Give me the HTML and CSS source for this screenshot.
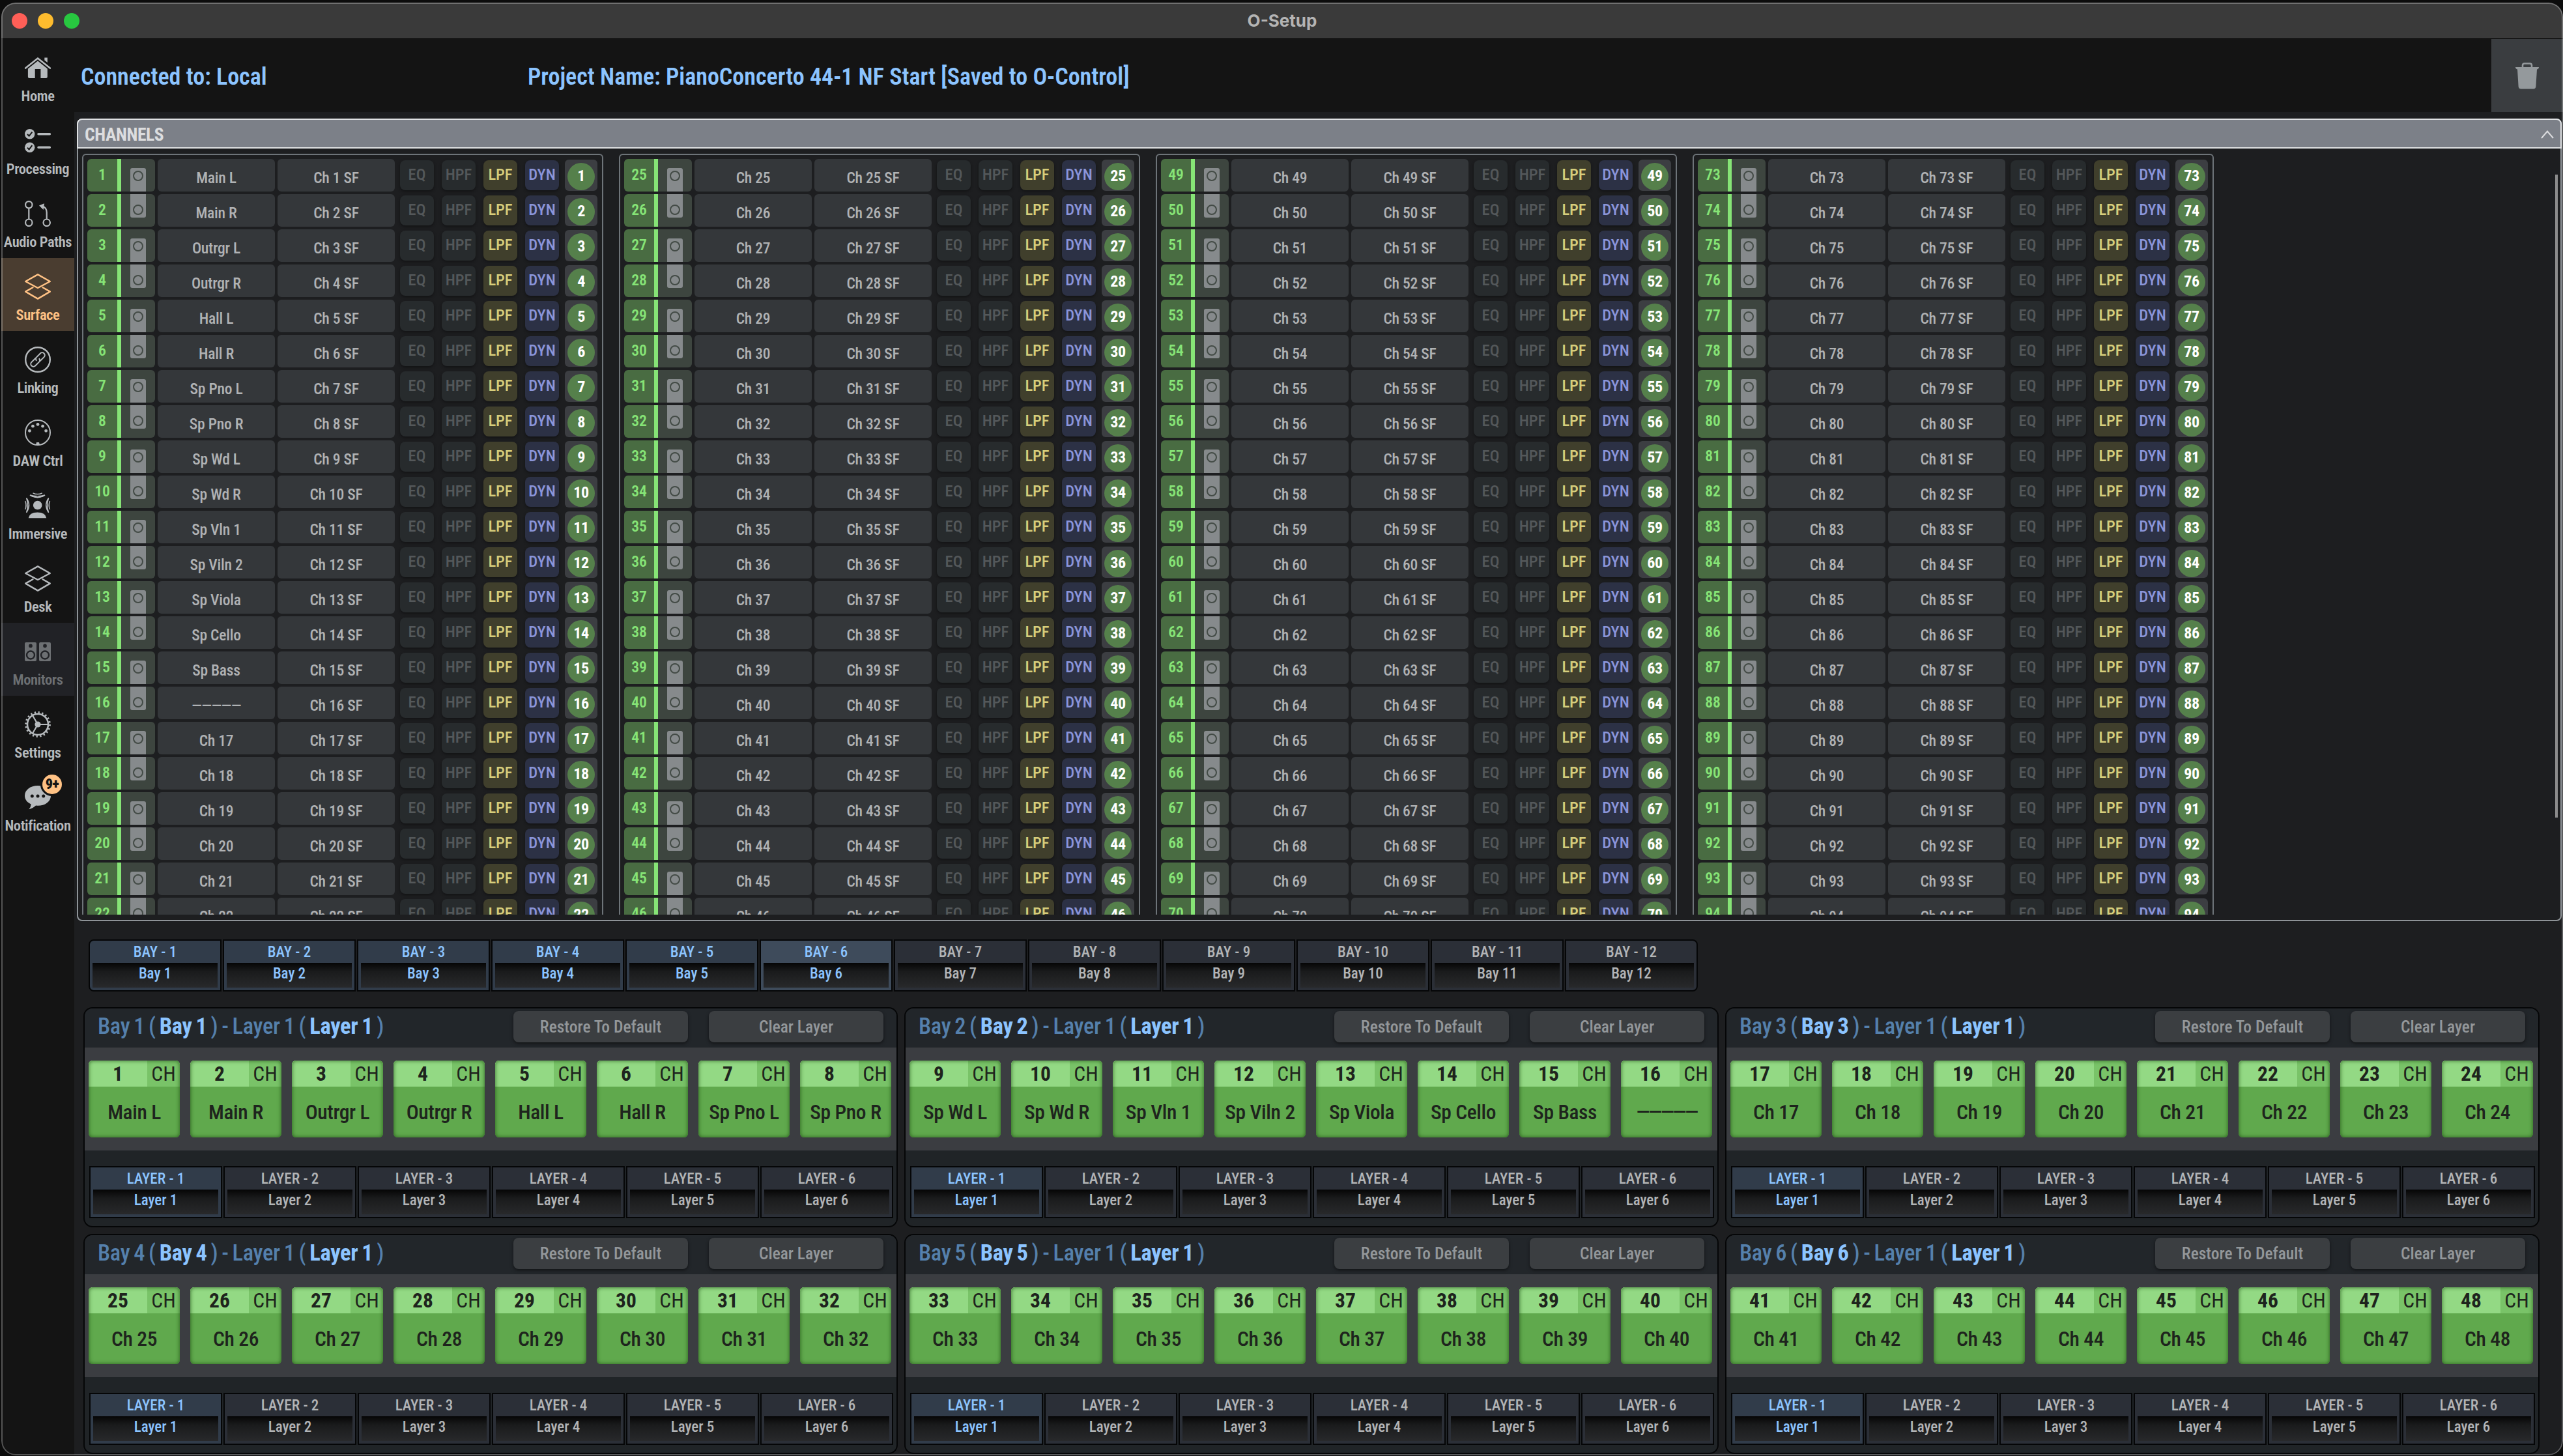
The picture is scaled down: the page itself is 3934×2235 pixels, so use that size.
FILE: index.html
```html
<!DOCTYPE html>
<html lang="en">
<head>
  <meta charset="UTF-8" />
  <meta name="viewport" content="width=device-width, initial-scale=1.0" />
  <title>O-Setup</title>
  <link rel="stylesheet" href="styles.css">
</head>
<body>
  <div class="window">
    <div class="titlebar">
      <div class="lights">
        <span class="light red"></span>
        <span class="light yellow"></span>
        <span class="light green"></span>
      </div>
      <div class="window-title">O-Setup</div>
    </div>

    <div class="main">
      <nav class="sidebar">
        <a class="nav-item">
          <svg viewBox="0 0 40 40">
            <path d="M1.2 20.6 L20 5.4 L38.8 20.6" fill="none" stroke="currentColor" stroke-width="2.6" stroke-linecap="round" stroke-linejoin="round" />
            <path d="M20 9.6 L34.8 21.5 V33.5 Q34.8 36 32.3 36 H24.4 V22 H15.7 V36 H7.4 Q4.9 36 4.9 33.5 V21.5 Z" fill="currentColor" />
            <path d="M30.3 4.6 H34.8 V12 L30.3 8.4 Z" fill="currentColor" />
          </svg>
          <span>Home</span>
        </a>
        <a class="nav-item">
          <svg viewBox="0 0 40 40">
            <circle cx="7.7" cy="9.7" r="7.7" fill="currentColor" />
            <circle cx="7.7" cy="30.3" r="7.7" fill="currentColor" />
            <path d="M4 10 L6.6 12.8 L11.4 6.6 M4 30.6 L6.6 33.4 L11.4 27.2" fill="none" stroke="#141414" stroke-width="2" />
            <path d="M21 9.7 H38.3 M21 30.3 H38.3" stroke="currentColor" stroke-width="3.6" stroke-linecap="round" />
          </svg>
          <span>Processing</span>
        </a>
        <a class="nav-item">
          <svg viewBox="0 0 40 40" fill="none" stroke="currentColor" stroke-width="2.2">
            <circle cx="6.3" cy="6.3" r="5.2" />
            <circle cx="6.3" cy="33.7" r="5.2" />
            <circle cx="33.7" cy="33.7" r="5.2" />
            <path d="M6.3 11.5 V28.5 M33.7 28.5 V18 Q33.7 10.5 27 8.6" />
            <path d="M22 7.6 L30 4.2 L28.6 14 Z" fill="currentColor" stroke="none" />
          </svg>
          <span>Audio Paths</span>
        </a>
        <a class="nav-item active">
          <svg viewBox="0 0 40 40" fill="none" stroke="currentColor" stroke-width="2.4" stroke-linejoin="round" stroke-linecap="round">
            <path d="M20 1.4 L38.8 12 L20 22 L1.2 12 Z" />
            <path d="M12.4 21.2 L1.2 27.6 L20 38.6 L38.8 27.6 L27.6 21.2" />
          </svg>
          <span>Surface</span>
        </a>
        <a class="nav-item">
          <svg viewBox="0 0 40 40" fill="none" stroke="currentColor" stroke-width="2.4">
            <circle cx="20" cy="20" r="18.8" />
            <g transform="rotate(-45 20 20)" stroke-width="2">
              <path d="M20 16 H10.5 a4 4 0 0 0 0 8 H18.5 a4 4 0 0 0 4 -4" />
              <path d="M20 24 H29.5 a4 4 0 0 0 0 -8 H21.5 a4 4 0 0 0 -4 4" />
            </g>
          </svg>
          <span>Linking</span>
        </a>
        <a class="nav-item">
          <svg viewBox="0 0 40 40" fill="currentColor">
            <circle cx="20" cy="20" r="19" fill="none" stroke="currentColor" stroke-width="2" />
            <circle cx="7.4" cy="17.3" r="2.4" />
            <circle cx="12.4" cy="10.2" r="2.4" />
            <circle cx="20" cy="7.4" r="2.4" />
            <circle cx="27.6" cy="10.2" r="2.4" />
            <circle cx="32.6" cy="17.3" r="2.4" />
            <path d="M18 35 H22 L23 39 H17 Z" />
          </svg>
          <span>DAW Ctrl</span>
        </a>
        <a class="nav-item">
          <svg viewBox="0 0 40 40" fill="none" stroke="currentColor" stroke-width="1.5">
            <circle cx="19.7" cy="19.5" r="6.8" fill="currentColor" stroke="none" />
            <path d="M5.7 39.2 Q7 30.4 19.5 30.4 Q32 30.4 33.2 39.2 Z" fill="currentColor" stroke="none" />
            <path d="M8 4 Q19.6 7.6 31 4 Q19.6 11.4 8 4 Z" />
            <path d="M12.5 0.8 Q19.6 4.4 26.8 0.8" />
            <path d="M2.6 8.4 Q6.4 19.5 2.6 30.8 Q10.4 19.5 2.6 8.4 Z" />
            <path d="M0.6 13 Q3.4 19.5 0.6 26" />
            <path d="M36.6 8.4 Q32.8 19.5 36.6 30.8 Q28.8 19.5 36.6 8.4 Z" />
            <path d="M38.6 13 Q35.8 19.5 38.6 26" />
          </svg>
          <span>Immersive</span>
        </a>
        <a class="nav-item">
          <svg viewBox="0 0 40 40" fill="none" stroke="currentColor" stroke-width="2.4" stroke-linejoin="round" stroke-linecap="round">
            <path d="M20 1.4 L38.8 12 L20 22 L1.2 12 Z" />
            <path d="M12.4 21.2 L1.2 27.6 L20 38.6 L38.8 27.6 L27.6 21.2" />
          </svg>
          <span>Desk</span>
        </a>
        <a class="nav-item disabled">
          <svg viewBox="0 0 40 40" fill="currentColor">
            <rect x="0" y="6" width="18" height="29" rx="2" />
            <rect x="22" y="6" width="18" height="29" rx="2" />
            <g fill="#212226">
              <circle cx="9" cy="11.4" r="2.8" />
              <circle cx="31" cy="11.4" r="2.8" />
            </g>
            <g fill="none" stroke="#212226" stroke-width="2.4">
              <circle cx="9" cy="25.5" r="6" />
              <circle cx="31" cy="25.5" r="6" />
            </g>
          </svg>
          <span>Monitors</span>
        </a>
        <a class="nav-item">
          <svg viewBox="0 0 40 40" fill="none" stroke="currentColor">
            <circle cx="20" cy="20" r="16" stroke-width="2.6" />
            <circle cx="20" cy="20" r="18.4" stroke-width="3" stroke-dasharray="2.3 3.48" />
            <circle cx="20" cy="20" r="4.6" fill="currentColor" stroke="none" />
            <path d="M20 20 H36 M20 20 L12 6.2 M20 20 L12 33.8" stroke-width="2.2" />
          </svg>
          <span>Settings</span>
        </a>
        <a class="nav-item">
          <svg viewBox="0 0 40 40">
            <path d="M20 2 C31.5 2 40 8.6 40 17.4 C40 26.5 31 32.8 20 32.8 L17 32.6 Q13 36.6 6.4 38.2 Q9.4 35 9.6 30.4 C3.6 27.6 0 23 0 17.4 C0 8.6 8.5 2 20 2 Z" fill="currentColor" />
            <g fill="#141414">
              <circle cx="11.3" cy="18" r="2.5" />
              <circle cx="20" cy="18" r="2.5" />
              <circle cx="28.7" cy="18" r="2.5" />
            </g>
          </svg>
          <span>Notification</span>
          <b class="nav-badge">9+</b>
        </a>
      </nav>

      <div class="content">
        <header class="header">
          <div class="connected">Connected to: Local</div>
          <div class="project">Project Name: PianoConcerto 44-1 NF Start [Saved to O-Control]</div>
          <button class="trash">
            <svg viewBox="0 0 36 41">
              <path d="M11 8 V4.5 Q11 1.5 14 1.5 H22 Q25 1.5 25 4.5 V8" fill="none" stroke="currentColor" stroke-width="2.6" />
              <path d="M0 7 H36 Q36 10 33 10.4 L31.4 36.5 Q31.2 40.5 27.2 40.5 H8.8 Q4.8 40.5 4.6 36.5 L3 10.4 Q0 10 0 7 Z" fill="currentColor" />
            </svg>
          </button>
        </header>

        <section class="channels">
          <div class="channels-head">
            <span>CHANNELS</span>
            <svg viewBox="0 0 20 13"><path d="M1 12 L10 1.5 L19 12" fill="none" stroke="currentColor" stroke-width="2" /></svg>
          </div>
          <div class="channels-list" id="channels"></div>
          <div class="scrollbar"></div>
        </section>

        <div class="tabs bay-tabs" id="bayTabs"></div>

        <div class="bays" id="bays"></div>
      </div>
    </div>
  </div>

  <script>
    const names = ["Main L", "Main R", "Outrgr L", "Outrgr R", "Hall L", "Hall R", "Sp Pno L", "Sp Pno R",
      "Sp Wd L", "Sp Wd R", "Sp Vln 1", "Sp Viln 2", "Sp Viola", "Sp Cello", "Sp Bass", "—————"];

    function channelName(n) {
      return names[n - 1] || "Ch " + n;
    }

    function dashClass(n) {
      return n === 16 ? " dashes" : "";
    }

    function channelRow(n) {
      return `
        <div class="row">
          <div class="num">${n}</div>
          <div class="pair ${n % 2 ? "top" : "bottom"}"><div class="speaker"><i></i></div></div>
          <div class="cell${dashClass(n)}">${channelName(n)}</div>
          <div class="cell">Ch ${n} SF</div>
          <div class="fx">EQ</div>
          <div class="fx">HPF</div>
          <div class="fx lpf">LPF</div>
          <div class="fx dyn">DYN</div>
          <div class="strip"><span>${n}</span></div>
        </div>`;
    }

    function tab(label, name, cls) {
      return `<div class="tab ${cls}"><div class="tab-label">${label}</div><div class="tab-name">${name}</div></div>`;
    }

    function bayPanel(b) {
      let tiles = "";
      for (let n = (b - 1) * 8 + 1; n <= b * 8; n++) {
        tiles += `
          <div class="tile">
            <div class="tile-head"><b>${n}</b><span>CH</span></div>
            <div class="tile-name${dashClass(n)}">${channelName(n)}</div>
          </div>`;
      }
      let layers = "";
      for (let l = 1; l <= 6; l++) {
        layers += tab("LAYER - " + l, "Layer " + l, l === 1 ? "on" : "");
      }
      return `
        <section class="bay">
          <div class="bay-head">
            <h2>Bay ${b} ( <b>Bay ${b}</b> ) - Layer 1 ( <b>Layer 1</b> )</h2>
            <button>Restore To Default</button>
            <button>Clear Layer</button>
          </div>
          <div class="tiles">${tiles}</div>
          <div class="tabs layer-tabs">${layers}</div>
        </section>`;
    }

    let html = "";
    for (let c = 0; c < 4; c++) {
      html += '<div class="column">';
      for (let n = c * 24 + 1; n <= c * 24 + 22; n++) html += channelRow(n);
      html += "</div>";
    }
    document.getElementById("channels").innerHTML = html;

    html = "";
    for (let b = 1; b <= 12; b++) {
      html += tab("BAY - " + b, "Bay " + b, b === 6 ? "on current" : b < 6 ? "on" : "");
    }
    document.getElementById("bayTabs").innerHTML = html;

    html = "";
    for (let b = 1; b <= 6; b++) html += bayPanel(b);
    document.getElementById("bays").innerHTML = html;
  </script>
</body>
</html>
```
FILE: styles.css
```css
* {
  box-sizing: border-box;
}

body {
  margin: 0;
  height: 2235px;
  padding: 4px 0 1px 2px;
  overflow: hidden;
  background: #0c0c0c;
  font-family: "Roboto Condensed", Roboto, "Liberation Sans", sans-serif;
  font-stretch: 75%;
}

.window {
  position: relative;
  height: 2230px;
  display: flex;
  flex-direction: column;
  border-radius: 22px;
  overflow: hidden;
  background: #1d1e20;
}

.window::after {
  content: "";
  position: absolute;
  inset: 0;
  border: 2px solid rgba(255, 255, 255, 0.28);
  border-radius: 22px;
  pointer-events: none;
}

/* title bar */
.titlebar {
  position: relative;
  height: 56px;
  flex: none;
  display: flex;
  align-items: center;
  justify-content: center;
  background: #3a3a3a;
  border-bottom: 1px solid #000;
}

.lights {
  position: absolute;
  left: 16px;
  top: 16px;
  display: flex;
  gap: 16px;
}

.light {
  width: 24px;
  height: 24px;
  border-radius: 50%;
}

.red { background: #ff5f57; }
.yellow { background: #febc2e; }
.green { background: #28c840; }

.window-title {
  font: 700 26px Inter, sans-serif;
  color: #b4b4b4;
}

.main {
  flex: 1;
  display: flex;
  min-height: 0;
}

/* sidebar */
.sidebar {
  width: 112px;
  flex: none;
  background: #141414;
}

.nav-item {
  position: relative;
  height: 112px;
  padding-top: 24px;
  display: flex;
  flex-direction: column;
  align-items: center;
  color: #b6babd;
  font-size: 22.5px;
  font-weight: 600;
  letter-spacing: -0.4px;
  line-height: 26px;
  white-space: nowrap;
}

.nav-item svg {
  width: 40px;
  height: 40px;
  margin-bottom: 10px;
  overflow: visible;
}

.nav-item.active {
  background: #4a3d30;
  color: #ffc285;
}

.nav-item.disabled {
  background: #212226;
  color: #6d7073;
}

.nav-badge {
  position: absolute;
  left: 60px;
  top: 6px;
  width: 36px;
  height: 36px;
  border: 3px solid #141414;
  border-radius: 50%;
  background: #ffc285;
  color: #141414;
  font-size: 22px;
  font-weight: 900;
  line-height: 29px;
  text-align: center;
}

/* header */
.content {
  flex: 1;
  min-width: 0;
}

.header {
  height: 112px;
  display: flex;
  align-items: center;
  padding-left: 10px;
  background: #141414;
  color: #8cc4ff;
  font-size: 36px;
  font-weight: 600;
}

.connected {
  width: 686px;
  padding-top: 4px;
}

.project {
  flex: 1;
  padding-top: 4px;
}

.trash {
  width: 110px;
  height: 112px;
  padding: 0;
  border: 0;
  display: flex;
  align-items: center;
  justify-content: center;
  background: #3a3d40;
  color: #94999c;
}

.trash svg {
  width: 36px;
  height: 41px;
}

/* channel list */
.channels {
  position: relative;
  height: 1232px;
  margin: 10px 2px 0 4px;
  border: 2px solid #8e9397;
  border-radius: 8px;
}

.channels-head {
  height: 46px;
  margin: -2px -2px 0;
  padding: 2px 10px 0 10px;
  display: flex;
  align-items: center;
  justify-content: space-between;
  border: 2px solid #dfe1e3;
  border-radius: 8px 8px 0 0;
  background: #7c8088;
  color: #dcdddf;
  font-size: 27.5px;
  font-weight: 700;
  letter-spacing: -0.4px;
}

.channels-head svg {
  width: 20px;
  height: 13px;
}

.channels-list {
  height: 1176px;
  padding: 8px 6px 0;
  display: flex;
  align-items: flex-start;
  gap: 24px;
  overflow: hidden;
}

.scrollbar {
  position: absolute;
  right: 4px;
  top: 84px;
  width: 4px;
  height: 987px;
  background: #8b8b8b;
}

.column {
  width: 800px;
  flex: none;
  padding: 6px;
  display: flex;
  flex-direction: column;
  gap: 4px;
  border: 2px solid #6e7479;
  border-radius: 6px;
}

.row {
  height: 50px;
  display: flex;
  align-items: center;
  line-height: 26px;
}

.num {
  width: 52px;
  height: 50px;
  padding: 11px 0 0;
  border-right: 6px solid #86e476;
  border-radius: 6px 0 0 6px;
  background: #496c42;
  color: #86e476;
  font-size: 23.5px;
  font-weight: 600;
  text-align: center;
}

.pair {
  width: 52px;
  height: 50px;
  margin-right: 4px;
  padding-left: 14px;
  border-radius: 0 6px 6px 0;
  background: #3d453f;
}

.pair.top {
  padding-top: 14px;
}

.speaker {
  width: 24px;
  height: 36px;
  padding: 4px;
  border-radius: 3px 3px 0 0;
  background: #868a8c;
}

.bottom .speaker {
  padding-top: 16px;
  border-radius: 0 0 3px 3px;
}

.speaker i {
  display: block;
  width: 16px;
  height: 16px;
  border: 2px solid #434b46;
  border-radius: 50%;
}

.cell {
  width: 180px;
  height: 50px;
  margin-right: 4px;
  padding-top: 16px;
  border-radius: 6px;
  background: #34373a;
  color: #b0b2b4;
  font-size: 23.5px;
  font-weight: 500;
  letter-spacing: -0.2px;
  text-align: center;
}

.cell.dashes {
  letter-spacing: -0.5px;
}

.fx {
  width: 52px;
  height: 46px;
  margin: 0 8px 0 4px;
  padding-top: 9px;
  border-radius: 8px;
  background: #272b2d;
  box-shadow: 0 2px 4px rgba(0, 0, 0, 0.4);
  color: #54585a;
  font-size: 24.5px;
  font-weight: 500;
  text-align: center;
}

.fx.lpf {
  background: #403f2c;
  color: #d6ce7c;
}

.fx.dyn {
  background: #2c3145;
  color: #8b95da;
}

.strip {
  width: 50px;
  height: 48px;
  margin-left: 1px;
  padding: 5px 4px 0;
  border-radius: 6px;
  background: #3c3e42;
}

.strip span {
  display: block;
  width: 42px;
  height: 42px;
  padding-top: 7px;
  border-radius: 50%;
  background: #55804b;
  color: #fff;
  font-size: 24px;
  font-weight: 700;
  letter-spacing: -0.5px;
  text-align: center;
}

/* bay and layer tabs */
.tabs {
  display: flex;
  gap: 2px;
}

.bay-tabs {
  margin: 28px 0 0 22px;
}

.tab {
  width: 204px;
  height: 80px;
  padding: 0 4px 4px;
  border: 2px solid #050607;
  background: #2b2f37;
  color: #b2b4b6;
  font-size: 23px;
  font-weight: 500;
  text-align: center;
}

.tab-label {
  height: 34px;
  line-height: 36px;
}

.tab-name {
  height: 38px;
  line-height: 34px;
  background: linear-gradient(#050505, #1a1b1c 35%, #28292b);
}

.tab.on {
  background: #313c4a;
  color: #8cc4ff;
}

.tab.current {
  background: #3e4b5b;
}

.bay-tabs .tab:first-child {
  border-radius: 8px 0 0 8px;
}

.bay-tabs .tab:last-child {
  border-radius: 0 8px 8px 0;
}

/* bay panels */
.bays {
  display: grid;
  grid-template-columns: repeat(3, 1250px);
  gap: 10px;
  margin: 24px 0 0 14px;
}

.bay {
  height: 338px;
  border: 2px solid #050607;
  border-radius: 14px;
  overflow: hidden;
  background: #202427;
}

.bay-head {
  height: 60px;
  padding: 4px 20px 0 20px;
  display: flex;
  align-items: flex-start;
  gap: 32px;
  background: #22262a;
}

.bay-head h2 {
  flex: 1;
  margin: 0;
  color: #5580ac;
  font-size: 34.5px;
  font-weight: 500;
  line-height: 47px;
  letter-spacing: -0.3px;
  word-spacing: -1.7px;
}

.bay-head h2 b {
  color: #8cc4ff;
  font-weight: 700;
}

.bay-head button {
  width: 268px;
  height: 48px;
  padding: 0;
  border: 0;
  border-radius: 8px;
  background: #3b3e41;
  box-shadow: 0 2px 5px rgba(0, 0, 0, 0.5);
  color: #93979a;
  font: inherit;
  font-size: 25.5px;
  font-weight: 500;
}

.tiles {
  height: 158px;
  padding: 20px 6px;
  display: flex;
  gap: 16px;
  background: #3b3d41;
}

.tile {
  position: relative;
  width: 140px;
  height: 118px;
  border-radius: 6px;
  overflow: hidden;
  background: #60a94d;
  color: #1e241d;
}

.tile::after {
  content: "";
  position: absolute;
  inset: 0;
  border-radius: 6px;
  box-shadow: inset 0 0 6px rgba(20, 70, 10, 0.75);
}

.tile-head {
  height: 40px;
  display: flex;
  background: #79c368;
  font-size: 31.5px;
  line-height: 42px;
  text-align: center;
}

.tile-head b {
  width: 90px;
  background: #93d984;
}

.tile-head span {
  width: 50px;
}

.tile-name {
  font-size: 31.5px;
  font-weight: 500;
  line-height: 80px;
  letter-spacing: -0.4px;
  text-align: center;
  white-space: nowrap;
}

.tile-name.dashes {
  letter-spacing: -2.4px;
}

.layer-tabs {
  margin: 24px 0 0 7px;
}
```
